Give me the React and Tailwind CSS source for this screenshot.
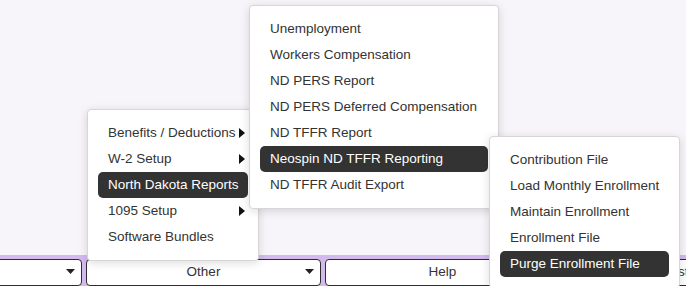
import React from "react";

const font = { fontFamily: '"Liberation Sans", Arial, sans-serif' };

const Caret = () => (
  <svg width="6" height="10" viewBox="0 0 6 10" className="shrink-0">
    <path d="M0 0 L6 5 L0 10 Z" fill="#111" />
  </svg>
);

const DownArrow = () => (
  <svg width="9" height="5" viewBox="0 0 9 5" className="shrink-0">
    <path d="M0 0 L9 0 L4.5 5 Z" fill="#222" />
  </svg>
);

const MenuItem = ({ label, active, sub }) => (
  <div
    className={`h-[26px] pl-[10px] pr-[3px] flex items-center justify-between rounded-[5px] text-[13.5px] whitespace-nowrap ${
      active ? "bg-[#333333] text-white" : "text-[#333333]"
    }`}
  >
    <span>{label}</span>
    {sub && <Caret />}
  </div>
);

const Menu = ({ items, className }) => (
  <div
    className={`absolute bg-white border border-[#d6d6d6] rounded-[4px] p-[10px] shadow-[0_2px_10px_rgba(0,0,0,0.14)] ${className}`}
  >
    {items.map((it) => (
      <MenuItem key={it.label} {...it} />
    ))}
  </div>
);

const BarButton = ({ label, dropdown, first }) => (
  <div
    className={`w-[235px] h-[27px] shrink-0 bg-white border border-[#2e2e2e] rounded-[4px] flex items-center relative text-[13.5px] text-[#333333] ${
      first ? "ml-[-153px]" : ""
    }`}
  >
    <span className="flex-1 text-center">{label}</span>
    {dropdown && (
      <span className="absolute right-[6px] top-[9px]">
        <DownArrow />
      </span>
    )}
  </div>
);

export default function App() {
  return (
    <div
      className="relative w-[686px] h-[286px] overflow-hidden bg-[#f7f5f9] flex flex-col"
      style={font}
    >
      <div className="h-[255px] shrink-0" />
      <div className="bg-[#d2b9ee] pt-[4px] flex gap-[4px] shrink-0">
        <BarButton label="" dropdown first />
        <BarButton label="Other" dropdown />
        <BarButton label="Help" />
        <BarButton label="Lists" />
      </div>

      <Menu
        className="left-[87px] top-[109px] w-[172px] z-10"
        items={[
          { label: "Benefits / Deductions", sub: true },
          { label: "W-2 Setup", sub: true },
          { label: "North Dakota Reports", active: true },
          { label: "1095 Setup", sub: true },
          { label: "Software Bundles" },
        ]}
      />
      <Menu
        className="left-[249px] top-[5px] w-[250px] z-20"
        items={[
          { label: "Unemployment" },
          { label: "Workers Compensation" },
          { label: "ND PERS Report" },
          { label: "ND PERS Deferred Compensation" },
          { label: "ND TFFR Report" },
          { label: "Neospin ND TFFR Reporting", active: true },
          { label: "ND TFFR Audit Export" },
        ]}
      />
      <Menu
        className="left-[489px] top-[136px] w-[191px] z-30"
        items={[
          { label: "Contribution File" },
          { label: "Load Monthly Enrollment" },
          { label: "Maintain Enrollment" },
          { label: "Enrollment File" },
          { label: "Purge Enrollment File", active: true },
        ]}
      />
    </div>
  );
}
